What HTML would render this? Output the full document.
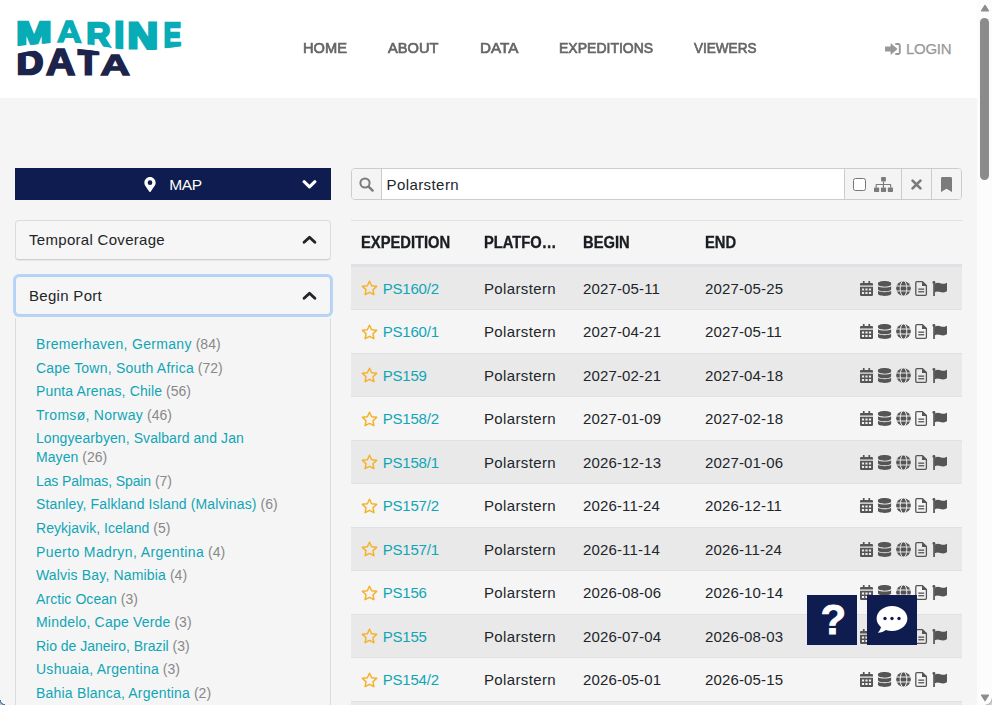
<!DOCTYPE html>
<html lang="en">
<head>
<meta charset="utf-8">
<title>Marine Data - Expeditions</title>
<style>
*{box-sizing:border-box;margin:0;padding:0}
html,body{width:992px;height:705px;overflow:hidden}
body{font-family:"Liberation Sans",sans-serif;font-size:15px;line-height:1.5;color:#212529;background:#f5f5f5;position:relative}
a{color:#10a5b5;text-decoration:none}
svg{display:block}
/* header */
#hdr{position:absolute;left:0;top:0;width:977px;height:98px;background:#fff}
#logo{position:absolute;left:0;top:0;width:200px;height:98px}
.lw{position:absolute;left:0;top:0;width:200px;height:98px;white-space:nowrap;font-kerning:none;font-weight:bold;font-size:40px;line-height:40px;-webkit-text-stroke:3.2px currentColor}
.lw span{display:inline-block;transform-origin:0 0}
#nav a{transform-origin:0 50%;position:absolute;top:37px;height:22px;line-height:22px;font-size:15px;font-weight:normal;-webkit-text-stroke:.7px #666;color:#666;white-space:nowrap}
#login{position:absolute;left:885px;top:38px;height:22px;line-height:22px;color:#999;font-size:15px;white-space:nowrap}
#login svg{position:absolute;left:0;top:5px}
#login span{position:absolute;left:21px;top:0;letter-spacing:-.3px;-webkit-text-stroke:.25px #999}
/* sidebar */
#side{position:absolute;left:15px;top:168px;width:316px}
#mapbar{position:relative;height:32px;background:#0e1c4f;color:#fff;line-height:32px}
#mapbar span{position:absolute;left:154.3px;top:.5px;font-size:15.5px;letter-spacing:-.35px}
#mapbar .mk{position:absolute;left:129px;top:8.5px}
#mapbar .cv{position:absolute;left:287px;top:10.5px}
.pnl{position:absolute;left:0;width:316px;height:39.5px;border:1px solid #dcdcdc;border-bottom-color:#cfcfcf;border-radius:4px;background:#f6f6f6;padding:7.5px 13px;font-size:15px;line-height:22.5px;letter-spacing:.3px}
.pnl svg{position:absolute;right:13px;top:14px}
#p2 svg{top:14.300px}
#p1{top:52px;box-shadow:0 1px 0 rgba(0,0,0,.05)}
#p2{padding-top:8.600px;top:107.700px;border-color:#b3d0f5;box-shadow:0 0 0 2px #b9d4f6}
#plist{position:absolute;left:0;top:149.500px;width:316px;height:400px;border-left:1px solid #dcdcdc;border-right:1px solid #dcdcdc;padding:17.500px 20px 0 20px;font-size:14px;line-height:19.07px;list-style:none;color:#888}
#plist li{margin-bottom:4.5px}
/* main */
#main{position:absolute;left:351px;top:168px;width:611px}
#sbar{position:relative;height:32px;border:1px solid #ccc;border-radius:4px;background:#fff;overflow:hidden}
#sbar .c{position:absolute;top:0;height:30px;background:#f4f4f4;border-left:1px solid #ccc}
#sbar .c svg{position:absolute}
#sbar .q{left:0;width:30px;border-left:0;border-right:1px solid #ccc}
#sbar .txt{position:absolute;left:34.500px;top:.700px;line-height:30px;font-size:15px;color:#212529;letter-spacing:.42px}
#sbar .cb{position:absolute;left:7.700px;top:9px;width:13px;height:13px;border:1px solid #767676;border-radius:2.5px;background:#fff}
#tbl{position:absolute;left:0;top:52px;width:611px;border-collapse:separate;border-spacing:0;font-size:15px}
#tbl th{height:45.5px;padding:0 10px;text-align:left;font-weight:bold;border-top:1px solid #dee2e6;border-bottom:2px solid #dee2e6;white-space:nowrap;vertical-align:middle;color:#1a1d21;font-size:16px;padding-top:1px}
#tbl th span{-webkit-text-stroke:.35px #1a1d21;display:inline-block;transform-origin:0 50%;transform:scaleX(.92)}
#tbl td{height:43.5px;padding:2.4px 10px 0;border-top:1px solid #dee2e6;vertical-align:middle;white-space:nowrap;position:relative}
#tbl tr.o td{background:#e9e9e9}
#tbl td.e a{letter-spacing:-.2px;position:absolute;left:31.700px;top:11.200px;line-height:22.5px}
#tbl td.e svg{position:absolute;left:9.500px;top:13.700px}
#tbl td.p{letter-spacing:.36px}
#tbl td.d{letter-spacing:.14px}
#tbl td.i svg{position:absolute;left:30px;top:14.300px}
/* floating */
.fb{position:absolute;top:595px;width:50px;height:50px;background:#0e1c4f}
.fb svg{position:absolute;left:0;top:0}
.fb b{position:absolute;left:1.300px;top:-.200px;width:50px;text-align:center;color:#fff;font-size:42px;line-height:50px;font-weight:bold;-webkit-text-stroke:.8px #fff}
/* scrollbar */
#sb{position:absolute;left:977px;top:0;width:15px;height:705px;background:#fcfcfc}
#sb i{position:absolute;left:3px;top:18px;width:9px;height:162px;border-radius:4.5px;background:#8b8b8b}
</style>
</head>
<body>

<svg width="0" height="0" style="position:absolute"><defs><mask id="gm" maskUnits="userSpaceOnUse" x="36" y="0" width="15" height="15"><rect x="36" y="0" width="15" height="15" fill="#fff"/><g fill="none" stroke="#000" stroke-width="1"><ellipse cx="43.500" cy="7.500" rx="3.300" ry="7.800"/><path d="M36 5h15M36 10h15"/></g></mask></defs></svg>
<div id="hdr">
<div id="logo" role="img" aria-label="MARINE DATA"><div class="lw" style="color:#07acb6;clip-path:path('M5.00 48.00C5.83 47.88 7.83 47.60 10.00 47.30C12.17 47.00 15.50 46.55 18.00 46.20C20.50 45.85 22.17 45.50 25.00 45.20C27.83 44.90 31.83 44.65 35.00 44.40C38.17 44.15 41.33 43.92 44.00 43.70C46.67 43.48 48.83 43.27 51.00 43.10C53.17 42.93 53.83 42.78 57.00 42.70C60.17 42.62 65.83 42.45 70.00 42.60C74.17 42.75 79.00 43.28 82.00 43.60C85.00 43.92 85.83 44.22 88.00 44.50C90.17 44.78 92.17 44.92 95.00 45.30C97.83 45.68 102.33 46.37 105.00 46.80C107.67 47.23 108.67 47.55 111.00 47.90C113.33 48.25 116.00 48.62 119.00 48.90C122.00 49.18 125.00 49.42 129.00 49.60C133.00 49.78 138.33 49.98 143.00 50.00C147.67 50.02 153.33 49.95 157.00 49.70C160.67 49.45 162.33 48.88 165.00 48.50C167.67 48.12 170.33 47.77 173.00 47.40C175.67 47.03 178.17 46.70 181.00 46.30C183.83 45.90 187.67 45.30 190.00 45.00C192.33 44.70 194.17 44.58 195.00 44.50L195 0L5 0Z')"><span style="-webkit-text-stroke-width:3.2px;transform:matrix(1.0604,0,0,0.8203,16.35,17.51)">M</span><span style="-webkit-text-stroke-width:1.7px;transform:matrix(0.8807,0,0,0.7700,23.45,17.17)">A</span><span style="-webkit-text-stroke-width:2.6px;transform:matrix(0.8417,0,0,0.8964,24.13,16.88)">R</span><span style="-webkit-text-stroke-width:3.2px;transform:matrix(0.8632,0,0,0.9049,23.57,17.11)">I</span><span style="-webkit-text-stroke-width:3.2px;transform:matrix(1.0570,0,0,0.9310,25.45,16.99)">N</span><span style="-webkit-text-stroke-width:3.0px;transform:matrix(0.6496,0,0,0.8879,32.64,17.10)">E</span></div><div class="lw" style="color:#1d244b;clip-path:path('M5.00 56.00C5.83 55.83 7.87 55.42 10.00 55.00C12.13 54.58 14.47 54.12 17.80 53.50C21.13 52.88 26.30 51.93 30.00 51.30C33.70 50.67 36.00 50.25 40.00 49.70C44.00 49.15 49.67 48.27 54.00 48.00C58.33 47.73 62.17 47.97 66.00 48.10C69.83 48.23 73.33 48.47 77.00 48.80C80.67 49.13 84.33 49.63 88.00 50.10C91.67 50.57 94.83 51.03 99.00 51.60C103.17 52.17 108.67 53.05 113.00 53.50C117.33 53.95 121.33 54.08 125.00 54.30C128.67 54.52 132.50 54.68 135.00 54.80C137.50 54.92 139.17 54.97 140.00 55.00L140 98L5 98Z')"><span style="-webkit-text-stroke-width:3.0px;transform:matrix(0.9170,0,0,0.8486,16.72,45.49)">D</span><span style="-webkit-text-stroke-width:1.7px;transform:matrix(1.0281,0,0,0.9446,16.66,42.71)">A</span><span style="-webkit-text-stroke-width:3.2px;transform:matrix(0.8234,0,0,0.8724,20.18,44.56)">T</span><span style="-webkit-text-stroke-width:1.7px;transform:matrix(1.0351,0,0,0.7529,18.14,49.37)">A</span></div></div>
<div id="nav">
  <a style="left:303.3px;transform:scaleX(0.976)">HOME</a>
  <a style="left:388px;transform:scaleX(0.975)">ABOUT</a>
  <a style="left:479.7px;transform:scaleX(1.014)">DATA</a>
  <a style="left:559.2px;transform:scaleX(0.934)">EXPEDITIONS</a>
  <a style="left:694px;transform:scaleX(0.903)">VIEWERS</a>
</div>
<div id="login">
  <svg width="16" height="12" viewBox="0 0 16 12"><path fill="#999" d="M0 3.700Q0 3.400 .4 3.400H5.600V.8Q5.600 0 6.200 .5L12 5.600Q12.400 6 12 6.400L6.200 11.500Q5.600 12 5.600 11.200V8.600H.4Q0 8.600 0 8.300Z"/><path fill="none" stroke="#999" stroke-width="1.900" d="M10.300 1H13.300Q14.800 1 14.800 2.500V9.500Q14.800 11 13.300 11H10.300"/></svg>
  <span>LOGIN</span>
</div>
</div>

<div id="side">
  <div id="mapbar">
    <svg class="mk" width="12" height="15" viewBox="0 0 384 512"><path fill="#fff" d="M172 502C27 291 0 269 0 192C0 86 86 0 192 0s192 86 192 192c0 77-27 99-172 310c-10 14-30 14-40 0zM192 272a80 80 0 1 0 0-160a80 80 0 0 0 0 160z"/></svg>
    <span>MAP</span>
    <svg class="cv" width="15" height="10" viewBox="0 0 15 10"><path fill="none" stroke="#fff" stroke-width="3.100" stroke-linecap="round" stroke-linejoin="round" d="M2.100 2.700L7.500 7.800L12.900 2.700"/></svg>
  </div>
  <div class="pnl" id="p1">Temporal Coverage<svg width="15" height="10" viewBox="0 0 15 10"><path fill="none" stroke="#212529" stroke-width="2.9" stroke-linecap="round" stroke-linejoin="round" d="M2.100 7.300L7.500 2.200L12.900 7.300"/></svg></div>
  <div class="pnl" id="p2">Begin Port<svg width="15" height="10" viewBox="0 0 15 10"><path fill="none" stroke="#212529" stroke-width="2.9" stroke-linecap="round" stroke-linejoin="round" d="M2.100 7.300L7.500 2.200L12.900 7.300"/></svg></div>
  <ul id="plist">
    <li><a style="letter-spacing:0.32px">Bremerhaven, Germany</a> (84)</li>
    <li><a style="letter-spacing:0.21px">Cape Town, South Africa</a> (72)</li>
    <li><a style="letter-spacing:0.13px">Punta Arenas, Chile</a> (56)</li>
    <li><a style="letter-spacing:0.30px">Tromsø, Norway</a> (46)</li>
    <li><a style="letter-spacing:0.08px">Longyearbyen, Svalbard and Jan<br>Mayen</a> (26)</li>
    <li><a style="letter-spacing:-0.10px">Las Palmas, Spain</a> (7)</li>
    <li><a style="letter-spacing:0.13px">Stanley, Falkland Island (Malvinas)</a> (6)</li>
    <li><a style="letter-spacing:0.03px">Reykjavik, Iceland</a> (5)</li>
    <li><a style="letter-spacing:0.39px">Puerto Madryn, Argentina</a> (4)</li>
    <li><a style="letter-spacing:0.17px">Walvis Bay, Namibia</a> (4)</li>
    <li><a style="letter-spacing:0.07px">Arctic Ocean</a> (3)</li>
    <li><a style="letter-spacing:0.20px">Mindelo, Cape Verde</a> (3)</li>
    <li><a style="letter-spacing:-0.02px">Rio de Janeiro, Brazil</a> (3)</li>
    <li><a style="letter-spacing:0.26px">Ushuaia, Argentina</a> (3)</li>
    <li><a style="letter-spacing:0.20px">Bahia Blanca, Argentina</a> (2)</li>
  </ul>
</div>

<div id="main">
  <div id="sbar">
    <div class="c q"><svg style="left:6.500px;top:8px" width="15" height="15" viewBox="0 0 15 15"><circle cx="6" cy="6" r="4.6" fill="none" stroke="#7b7b7b" stroke-width="2"/><path d="M9.6 9.6L13.6 13.6" stroke="#7b7b7b" stroke-width="2.4" stroke-linecap="round"/></svg></div>
    <div class="txt">Polarstern</div>
    <div class="c" style="left:492.300px;width:57px"><div class="cb"></div>
      <svg style="left:28.500px;top:8px" width="19" height="15" viewBox="0 0 19 15"><g fill="#7b7b7b"><rect x="7.100" y="0" width="4.800" height="4.500" rx=".7"/><rect x="0" y="10.400" width="5.200" height="4.600" rx=".7"/><rect x="6.900" y="10.400" width="5.200" height="4.600" rx=".7"/><rect x="13.800" y="10.400" width="5.200" height="4.600" rx=".7"/><path d="M8.900 4.500h1.200v2.400h6.200q.9 0 .9.900v2.600h-1.200v-2.300h-6v2.300h-1.200v-2.300h-6v2.300h-1.200v-2.600q0-.9.900-.9h6.400z"/></g></svg>
    </div>
    <div class="c" style="left:549.200px;width:31px"><svg style="left:9px;top:10px" width="11" height="11" viewBox="0 0 11 11"><path d="M1.600 1.600L9.400 9.400M9.400 1.600L1.600 9.400" stroke="#7b7b7b" stroke-width="2.700" stroke-linecap="round"/></svg></div>
    <div class="c" style="left:579px;width:31px"><svg style="left:9.200px;top:8px" width="11" height="15" viewBox="0 0 11 15"><path fill="#7b7b7b" d="M0 15V1.400Q0 0 1.400 0H9.600Q11 0 11 1.400V15L5.500 11.800Z"/></svg></div>
  </div>
  <table id="tbl">
    <colgroup><col style="width:123px"><col style="width:99px"><col style="width:122px"><col style="width:135px"><col style="width:132px"></colgroup>
    <thead><tr><th><span>EXPEDITION</span></th><th><span>PLATFO…</span></th><th><span>BEGIN</span></th><th><span>END</span></th><th></th></tr></thead>
    <tbody id="tb">
<tr class="o"><td class="e"><svg width="17" height="16" viewBox="0 0 17 16"><path fill="none" stroke="#f5b127" stroke-width="1.500" stroke-linejoin="round" d="M8.5 1.2L10.65 5.7L15.6 6.35L12 9.8L12.9 14.7L8.5 12.3L4.1 14.7L5 9.8L1.4 6.350L6.350 5.700Z"/></svg><a>PS160/2</a></td><td class="p">Polarstern</td><td class="d">2027-05-11</td><td class="d">2027-05-25</td><td class="i"><svg width="88" height="15" viewBox="0 0 88 15"><g fill="#555">
<path fill-rule="evenodd" d="M2.900 0h1.700v1.900h3.800V0h1.700v1.900h1.700q1.200 0 1.200 1.200v1.300H0V3.100q0-1.200 1.200-1.200h1.700zM0 5.700h13v8.100q0 1.200-1.200 1.200H1.200Q0 15 0 13.800zM1.900 7.500h2.200v2.100H1.900zM5.400 7.500h2.200v2.100H5.400zM8.900 7.500h2.200v2.100H8.900zM1.900 11h2.200v2.100H1.900zM5.400 11h2.200v2.100H5.400zM8.900 11h2.200v2.100H8.900z"/>
<path transform="translate(18 0) scale(.0293)" d="M448 73.143v45.714C448 159.143 347.667 192 224 192S0 159.143 0 118.857V73.143C0 32.857 100.333 0 224 0s224 32.857 224 73.143zM448 176v102.857C448 319.143 347.667 352 224 352S0 319.143 0 278.857V176c48.125 33.143 136.208 48.572 224 48.572S399.874 209.143 448 176zm0 160v102.857C448 479.143 347.667 512 224 512S0 479.143 0 438.857V336c48.125 33.143 136.208 48.572 224 48.572S399.874 369.143 448 336z"/>
<circle cx="43.500" cy="7.500" r="7.300" mask="url(#gm)"/>
<path fill="none" stroke="#555" stroke-width="1.300" stroke-linejoin="round" d="M56.800 .650h5.700l3.900 3.900v8.800q0 1-1 1h-8.600q-1 0-1-1v-11.700q0-1 1-1z"/>
<path d="M62 .650v4.400h4.400v-1z"/>
<rect x="58.300" y="7.500" width="5.900" height="1.300"/><rect x="58.300" y="10.100" width="5.900" height="1.300"/>
<path d="M72.400 1.500a1.500 1.500 0 1 1 2.500 1.100V15h-1.700V2.600a1.500 1.500 0 0 1-.8-1.100z"/>
<path d="M74.900 2.500c2-.9 3.600-.9 5.600-.2s3.600.8 6-.4c.3-.1.500 0 .5.400v7.400c0 .4-.2.700-.6.900c-2.300 1.200-4 1.200-6.100.5s-3.500-.7-5.400.2z"/>
</g></svg></td></tr>
<tr><td class="e"><svg width="17" height="16" viewBox="0 0 17 16"><path fill="none" stroke="#f5b127" stroke-width="1.500" stroke-linejoin="round" d="M8.5 1.2L10.65 5.7L15.6 6.35L12 9.8L12.9 14.7L8.5 12.3L4.1 14.7L5 9.8L1.4 6.350L6.350 5.700Z"/></svg><a>PS160/1</a></td><td class="p">Polarstern</td><td class="d">2027-04-21</td><td class="d">2027-05-11</td><td class="i"><svg width="88" height="15" viewBox="0 0 88 15"><g fill="#555">
<path fill-rule="evenodd" d="M2.900 0h1.700v1.900h3.800V0h1.700v1.900h1.700q1.200 0 1.200 1.200v1.300H0V3.100q0-1.200 1.200-1.200h1.700zM0 5.700h13v8.100q0 1.200-1.200 1.200H1.200Q0 15 0 13.800zM1.900 7.500h2.200v2.100H1.900zM5.400 7.500h2.200v2.100H5.400zM8.900 7.500h2.200v2.100H8.900zM1.900 11h2.200v2.100H1.900zM5.400 11h2.200v2.100H5.400zM8.900 11h2.200v2.100H8.900z"/>
<path transform="translate(18 0) scale(.0293)" d="M448 73.143v45.714C448 159.143 347.667 192 224 192S0 159.143 0 118.857V73.143C0 32.857 100.333 0 224 0s224 32.857 224 73.143zM448 176v102.857C448 319.143 347.667 352 224 352S0 319.143 0 278.857V176c48.125 33.143 136.208 48.572 224 48.572S399.874 209.143 448 176zm0 160v102.857C448 479.143 347.667 512 224 512S0 479.143 0 438.857V336c48.125 33.143 136.208 48.572 224 48.572S399.874 369.143 448 336z"/>
<circle cx="43.500" cy="7.500" r="7.300" mask="url(#gm)"/>
<path fill="none" stroke="#555" stroke-width="1.300" stroke-linejoin="round" d="M56.800 .650h5.700l3.900 3.900v8.800q0 1-1 1h-8.600q-1 0-1-1v-11.700q0-1 1-1z"/>
<path d="M62 .650v4.400h4.400v-1z"/>
<rect x="58.300" y="7.500" width="5.900" height="1.300"/><rect x="58.300" y="10.100" width="5.900" height="1.300"/>
<path d="M72.400 1.500a1.500 1.500 0 1 1 2.500 1.100V15h-1.700V2.600a1.500 1.500 0 0 1-.8-1.100z"/>
<path d="M74.900 2.500c2-.9 3.600-.9 5.600-.2s3.600.8 6-.4c.3-.1.500 0 .5.400v7.400c0 .4-.2.700-.6.900c-2.300 1.200-4 1.200-6.100.5s-3.500-.7-5.400.2z"/>
</g></svg></td></tr>
<tr class="o"><td class="e"><svg width="17" height="16" viewBox="0 0 17 16"><path fill="none" stroke="#f5b127" stroke-width="1.500" stroke-linejoin="round" d="M8.5 1.2L10.65 5.7L15.6 6.35L12 9.8L12.9 14.7L8.5 12.3L4.1 14.7L5 9.8L1.4 6.350L6.350 5.700Z"/></svg><a>PS159</a></td><td class="p">Polarstern</td><td class="d">2027-02-21</td><td class="d">2027-04-18</td><td class="i"><svg width="88" height="15" viewBox="0 0 88 15"><g fill="#555">
<path fill-rule="evenodd" d="M2.900 0h1.700v1.900h3.800V0h1.700v1.900h1.700q1.200 0 1.200 1.200v1.300H0V3.100q0-1.200 1.200-1.200h1.700zM0 5.700h13v8.100q0 1.200-1.200 1.200H1.200Q0 15 0 13.800zM1.900 7.500h2.200v2.100H1.900zM5.400 7.500h2.200v2.100H5.400zM8.900 7.500h2.200v2.100H8.900zM1.900 11h2.200v2.100H1.900zM5.400 11h2.200v2.100H5.400zM8.900 11h2.200v2.100H8.900z"/>
<path transform="translate(18 0) scale(.0293)" d="M448 73.143v45.714C448 159.143 347.667 192 224 192S0 159.143 0 118.857V73.143C0 32.857 100.333 0 224 0s224 32.857 224 73.143zM448 176v102.857C448 319.143 347.667 352 224 352S0 319.143 0 278.857V176c48.125 33.143 136.208 48.572 224 48.572S399.874 209.143 448 176zm0 160v102.857C448 479.143 347.667 512 224 512S0 479.143 0 438.857V336c48.125 33.143 136.208 48.572 224 48.572S399.874 369.143 448 336z"/>
<circle cx="43.500" cy="7.500" r="7.300" mask="url(#gm)"/>
<path fill="none" stroke="#555" stroke-width="1.300" stroke-linejoin="round" d="M56.800 .650h5.700l3.900 3.900v8.800q0 1-1 1h-8.600q-1 0-1-1v-11.700q0-1 1-1z"/>
<path d="M62 .650v4.400h4.400v-1z"/>
<rect x="58.300" y="7.500" width="5.900" height="1.300"/><rect x="58.300" y="10.100" width="5.900" height="1.300"/>
<path d="M72.400 1.500a1.500 1.500 0 1 1 2.500 1.100V15h-1.700V2.600a1.500 1.500 0 0 1-.8-1.100z"/>
<path d="M74.900 2.500c2-.9 3.600-.9 5.600-.2s3.600.8 6-.4c.3-.1.500 0 .5.400v7.400c0 .4-.2.700-.6.900c-2.300 1.200-4 1.200-6.100.5s-3.500-.7-5.400.2z"/>
</g></svg></td></tr>
<tr><td class="e"><svg width="17" height="16" viewBox="0 0 17 16"><path fill="none" stroke="#f5b127" stroke-width="1.500" stroke-linejoin="round" d="M8.5 1.2L10.65 5.7L15.6 6.35L12 9.8L12.9 14.7L8.5 12.3L4.1 14.7L5 9.8L1.4 6.350L6.350 5.700Z"/></svg><a>PS158/2</a></td><td class="p">Polarstern</td><td class="d">2027-01-09</td><td class="d">2027-02-18</td><td class="i"><svg width="88" height="15" viewBox="0 0 88 15"><g fill="#555">
<path fill-rule="evenodd" d="M2.900 0h1.700v1.900h3.800V0h1.700v1.900h1.700q1.200 0 1.200 1.200v1.300H0V3.100q0-1.200 1.200-1.200h1.700zM0 5.700h13v8.100q0 1.200-1.200 1.200H1.200Q0 15 0 13.800zM1.900 7.500h2.200v2.100H1.900zM5.400 7.500h2.200v2.100H5.400zM8.900 7.500h2.200v2.100H8.900zM1.900 11h2.200v2.100H1.900zM5.400 11h2.200v2.100H5.400zM8.900 11h2.200v2.100H8.900z"/>
<path transform="translate(18 0) scale(.0293)" d="M448 73.143v45.714C448 159.143 347.667 192 224 192S0 159.143 0 118.857V73.143C0 32.857 100.333 0 224 0s224 32.857 224 73.143zM448 176v102.857C448 319.143 347.667 352 224 352S0 319.143 0 278.857V176c48.125 33.143 136.208 48.572 224 48.572S399.874 209.143 448 176zm0 160v102.857C448 479.143 347.667 512 224 512S0 479.143 0 438.857V336c48.125 33.143 136.208 48.572 224 48.572S399.874 369.143 448 336z"/>
<circle cx="43.500" cy="7.500" r="7.300" mask="url(#gm)"/>
<path fill="none" stroke="#555" stroke-width="1.300" stroke-linejoin="round" d="M56.800 .650h5.700l3.900 3.900v8.800q0 1-1 1h-8.600q-1 0-1-1v-11.700q0-1 1-1z"/>
<path d="M62 .650v4.400h4.400v-1z"/>
<rect x="58.300" y="7.500" width="5.900" height="1.300"/><rect x="58.300" y="10.100" width="5.900" height="1.300"/>
<path d="M72.400 1.500a1.500 1.500 0 1 1 2.500 1.100V15h-1.700V2.600a1.500 1.500 0 0 1-.8-1.100z"/>
<path d="M74.900 2.500c2-.9 3.600-.9 5.600-.2s3.600.8 6-.4c.3-.1.500 0 .5.400v7.400c0 .4-.2.700-.6.900c-2.300 1.200-4 1.200-6.100.5s-3.500-.7-5.400.2z"/>
</g></svg></td></tr>
<tr class="o"><td class="e"><svg width="17" height="16" viewBox="0 0 17 16"><path fill="none" stroke="#f5b127" stroke-width="1.500" stroke-linejoin="round" d="M8.5 1.2L10.65 5.7L15.6 6.35L12 9.8L12.9 14.7L8.5 12.3L4.1 14.7L5 9.8L1.4 6.350L6.350 5.700Z"/></svg><a>PS158/1</a></td><td class="p">Polarstern</td><td class="d">2026-12-13</td><td class="d">2027-01-06</td><td class="i"><svg width="88" height="15" viewBox="0 0 88 15"><g fill="#555">
<path fill-rule="evenodd" d="M2.900 0h1.700v1.900h3.800V0h1.700v1.900h1.700q1.200 0 1.200 1.200v1.300H0V3.100q0-1.200 1.200-1.200h1.700zM0 5.700h13v8.100q0 1.200-1.200 1.200H1.200Q0 15 0 13.800zM1.900 7.500h2.200v2.100H1.900zM5.400 7.500h2.200v2.100H5.400zM8.900 7.500h2.200v2.100H8.900zM1.900 11h2.200v2.100H1.900zM5.400 11h2.200v2.100H5.400zM8.900 11h2.200v2.100H8.900z"/>
<path transform="translate(18 0) scale(.0293)" d="M448 73.143v45.714C448 159.143 347.667 192 224 192S0 159.143 0 118.857V73.143C0 32.857 100.333 0 224 0s224 32.857 224 73.143zM448 176v102.857C448 319.143 347.667 352 224 352S0 319.143 0 278.857V176c48.125 33.143 136.208 48.572 224 48.572S399.874 209.143 448 176zm0 160v102.857C448 479.143 347.667 512 224 512S0 479.143 0 438.857V336c48.125 33.143 136.208 48.572 224 48.572S399.874 369.143 448 336z"/>
<circle cx="43.500" cy="7.500" r="7.300" mask="url(#gm)"/>
<path fill="none" stroke="#555" stroke-width="1.300" stroke-linejoin="round" d="M56.800 .650h5.700l3.900 3.900v8.800q0 1-1 1h-8.600q-1 0-1-1v-11.700q0-1 1-1z"/>
<path d="M62 .650v4.400h4.400v-1z"/>
<rect x="58.300" y="7.500" width="5.900" height="1.300"/><rect x="58.300" y="10.100" width="5.900" height="1.300"/>
<path d="M72.400 1.500a1.500 1.500 0 1 1 2.500 1.100V15h-1.700V2.600a1.500 1.500 0 0 1-.8-1.100z"/>
<path d="M74.900 2.500c2-.9 3.600-.9 5.600-.2s3.600.8 6-.4c.3-.1.500 0 .5.400v7.400c0 .4-.2.700-.6.900c-2.300 1.200-4 1.200-6.100.5s-3.500-.7-5.400.2z"/>
</g></svg></td></tr>
<tr><td class="e"><svg width="17" height="16" viewBox="0 0 17 16"><path fill="none" stroke="#f5b127" stroke-width="1.500" stroke-linejoin="round" d="M8.5 1.2L10.65 5.7L15.6 6.35L12 9.8L12.9 14.7L8.5 12.3L4.1 14.7L5 9.8L1.4 6.350L6.350 5.700Z"/></svg><a>PS157/2</a></td><td class="p">Polarstern</td><td class="d">2026-11-24</td><td class="d">2026-12-11</td><td class="i"><svg width="88" height="15" viewBox="0 0 88 15"><g fill="#555">
<path fill-rule="evenodd" d="M2.900 0h1.700v1.900h3.800V0h1.700v1.900h1.700q1.200 0 1.200 1.200v1.300H0V3.100q0-1.200 1.200-1.200h1.700zM0 5.700h13v8.100q0 1.200-1.200 1.200H1.200Q0 15 0 13.800zM1.900 7.500h2.200v2.100H1.900zM5.400 7.500h2.200v2.100H5.400zM8.900 7.500h2.200v2.100H8.900zM1.900 11h2.200v2.100H1.900zM5.400 11h2.200v2.100H5.400zM8.900 11h2.200v2.100H8.900z"/>
<path transform="translate(18 0) scale(.0293)" d="M448 73.143v45.714C448 159.143 347.667 192 224 192S0 159.143 0 118.857V73.143C0 32.857 100.333 0 224 0s224 32.857 224 73.143zM448 176v102.857C448 319.143 347.667 352 224 352S0 319.143 0 278.857V176c48.125 33.143 136.208 48.572 224 48.572S399.874 209.143 448 176zm0 160v102.857C448 479.143 347.667 512 224 512S0 479.143 0 438.857V336c48.125 33.143 136.208 48.572 224 48.572S399.874 369.143 448 336z"/>
<circle cx="43.500" cy="7.500" r="7.300" mask="url(#gm)"/>
<path fill="none" stroke="#555" stroke-width="1.300" stroke-linejoin="round" d="M56.800 .650h5.700l3.900 3.900v8.800q0 1-1 1h-8.600q-1 0-1-1v-11.700q0-1 1-1z"/>
<path d="M62 .650v4.400h4.400v-1z"/>
<rect x="58.300" y="7.500" width="5.900" height="1.300"/><rect x="58.300" y="10.100" width="5.900" height="1.300"/>
<path d="M72.400 1.500a1.500 1.500 0 1 1 2.500 1.100V15h-1.700V2.600a1.500 1.500 0 0 1-.8-1.100z"/>
<path d="M74.900 2.500c2-.9 3.600-.9 5.600-.2s3.600.8 6-.4c.3-.1.500 0 .5.400v7.400c0 .4-.2.700-.6.900c-2.300 1.200-4 1.200-6.100.5s-3.500-.7-5.400.2z"/>
</g></svg></td></tr>
<tr class="o"><td class="e"><svg width="17" height="16" viewBox="0 0 17 16"><path fill="none" stroke="#f5b127" stroke-width="1.500" stroke-linejoin="round" d="M8.5 1.2L10.65 5.7L15.6 6.35L12 9.8L12.9 14.7L8.5 12.3L4.1 14.7L5 9.8L1.4 6.350L6.350 5.700Z"/></svg><a>PS157/1</a></td><td class="p">Polarstern</td><td class="d">2026-11-14</td><td class="d">2026-11-24</td><td class="i"><svg width="88" height="15" viewBox="0 0 88 15"><g fill="#555">
<path fill-rule="evenodd" d="M2.900 0h1.700v1.900h3.800V0h1.700v1.900h1.700q1.200 0 1.200 1.200v1.300H0V3.100q0-1.200 1.200-1.200h1.700zM0 5.700h13v8.100q0 1.200-1.200 1.200H1.200Q0 15 0 13.800zM1.900 7.500h2.200v2.100H1.900zM5.400 7.500h2.200v2.100H5.400zM8.900 7.500h2.200v2.100H8.900zM1.900 11h2.200v2.100H1.900zM5.400 11h2.200v2.100H5.400zM8.900 11h2.200v2.100H8.900z"/>
<path transform="translate(18 0) scale(.0293)" d="M448 73.143v45.714C448 159.143 347.667 192 224 192S0 159.143 0 118.857V73.143C0 32.857 100.333 0 224 0s224 32.857 224 73.143zM448 176v102.857C448 319.143 347.667 352 224 352S0 319.143 0 278.857V176c48.125 33.143 136.208 48.572 224 48.572S399.874 209.143 448 176zm0 160v102.857C448 479.143 347.667 512 224 512S0 479.143 0 438.857V336c48.125 33.143 136.208 48.572 224 48.572S399.874 369.143 448 336z"/>
<circle cx="43.500" cy="7.500" r="7.300" mask="url(#gm)"/>
<path fill="none" stroke="#555" stroke-width="1.300" stroke-linejoin="round" d="M56.800 .650h5.700l3.900 3.900v8.800q0 1-1 1h-8.600q-1 0-1-1v-11.700q0-1 1-1z"/>
<path d="M62 .650v4.400h4.400v-1z"/>
<rect x="58.300" y="7.500" width="5.900" height="1.300"/><rect x="58.300" y="10.100" width="5.900" height="1.300"/>
<path d="M72.400 1.500a1.500 1.500 0 1 1 2.500 1.100V15h-1.700V2.600a1.500 1.500 0 0 1-.8-1.100z"/>
<path d="M74.900 2.500c2-.9 3.600-.9 5.600-.2s3.600.8 6-.4c.3-.1.500 0 .5.400v7.400c0 .4-.2.700-.6.900c-2.300 1.200-4 1.200-6.100.5s-3.500-.7-5.400.2z"/>
</g></svg></td></tr>
<tr><td class="e"><svg width="17" height="16" viewBox="0 0 17 16"><path fill="none" stroke="#f5b127" stroke-width="1.500" stroke-linejoin="round" d="M8.5 1.2L10.65 5.7L15.6 6.35L12 9.8L12.9 14.7L8.5 12.3L4.1 14.7L5 9.8L1.4 6.350L6.350 5.700Z"/></svg><a>PS156</a></td><td class="p">Polarstern</td><td class="d">2026-08-06</td><td class="d">2026-10-14</td><td class="i"><svg width="88" height="15" viewBox="0 0 88 15"><g fill="#555">
<path fill-rule="evenodd" d="M2.900 0h1.700v1.900h3.800V0h1.700v1.900h1.700q1.200 0 1.200 1.200v1.300H0V3.100q0-1.200 1.200-1.200h1.700zM0 5.700h13v8.100q0 1.200-1.200 1.200H1.200Q0 15 0 13.800zM1.900 7.500h2.200v2.100H1.900zM5.400 7.500h2.200v2.100H5.400zM8.900 7.500h2.200v2.100H8.900zM1.900 11h2.200v2.100H1.900zM5.400 11h2.200v2.100H5.400zM8.900 11h2.200v2.100H8.900z"/>
<path transform="translate(18 0) scale(.0293)" d="M448 73.143v45.714C448 159.143 347.667 192 224 192S0 159.143 0 118.857V73.143C0 32.857 100.333 0 224 0s224 32.857 224 73.143zM448 176v102.857C448 319.143 347.667 352 224 352S0 319.143 0 278.857V176c48.125 33.143 136.208 48.572 224 48.572S399.874 209.143 448 176zm0 160v102.857C448 479.143 347.667 512 224 512S0 479.143 0 438.857V336c48.125 33.143 136.208 48.572 224 48.572S399.874 369.143 448 336z"/>
<circle cx="43.500" cy="7.500" r="7.300" mask="url(#gm)"/>
<path fill="none" stroke="#555" stroke-width="1.300" stroke-linejoin="round" d="M56.800 .650h5.700l3.900 3.900v8.800q0 1-1 1h-8.600q-1 0-1-1v-11.700q0-1 1-1z"/>
<path d="M62 .650v4.400h4.400v-1z"/>
<rect x="58.300" y="7.500" width="5.900" height="1.300"/><rect x="58.300" y="10.100" width="5.900" height="1.300"/>
<path d="M72.400 1.500a1.500 1.500 0 1 1 2.500 1.100V15h-1.700V2.600a1.500 1.500 0 0 1-.8-1.100z"/>
<path d="M74.900 2.500c2-.9 3.600-.9 5.600-.2s3.600.8 6-.4c.3-.1.500 0 .5.400v7.400c0 .4-.2.700-.6.900c-2.300 1.200-4 1.200-6.100.5s-3.500-.7-5.400.2z"/>
</g></svg></td></tr>
<tr class="o"><td class="e"><svg width="17" height="16" viewBox="0 0 17 16"><path fill="none" stroke="#f5b127" stroke-width="1.500" stroke-linejoin="round" d="M8.5 1.2L10.65 5.7L15.6 6.35L12 9.8L12.9 14.7L8.5 12.3L4.1 14.7L5 9.8L1.4 6.350L6.350 5.700Z"/></svg><a>PS155</a></td><td class="p">Polarstern</td><td class="d">2026-07-04</td><td class="d">2026-08-03</td><td class="i"><svg width="88" height="15" viewBox="0 0 88 15"><g fill="#555">
<path fill-rule="evenodd" d="M2.900 0h1.700v1.900h3.800V0h1.700v1.900h1.700q1.200 0 1.200 1.200v1.300H0V3.100q0-1.200 1.200-1.200h1.700zM0 5.700h13v8.100q0 1.200-1.200 1.200H1.200Q0 15 0 13.800zM1.900 7.500h2.200v2.100H1.900zM5.400 7.500h2.200v2.100H5.400zM8.900 7.500h2.200v2.100H8.900zM1.900 11h2.200v2.100H1.900zM5.400 11h2.200v2.100H5.400zM8.900 11h2.200v2.100H8.900z"/>
<path transform="translate(18 0) scale(.0293)" d="M448 73.143v45.714C448 159.143 347.667 192 224 192S0 159.143 0 118.857V73.143C0 32.857 100.333 0 224 0s224 32.857 224 73.143zM448 176v102.857C448 319.143 347.667 352 224 352S0 319.143 0 278.857V176c48.125 33.143 136.208 48.572 224 48.572S399.874 209.143 448 176zm0 160v102.857C448 479.143 347.667 512 224 512S0 479.143 0 438.857V336c48.125 33.143 136.208 48.572 224 48.572S399.874 369.143 448 336z"/>
<circle cx="43.500" cy="7.500" r="7.300" mask="url(#gm)"/>
<path fill="none" stroke="#555" stroke-width="1.300" stroke-linejoin="round" d="M56.800 .650h5.700l3.900 3.900v8.800q0 1-1 1h-8.600q-1 0-1-1v-11.700q0-1 1-1z"/>
<path d="M62 .650v4.400h4.400v-1z"/>
<rect x="58.300" y="7.500" width="5.900" height="1.300"/><rect x="58.300" y="10.100" width="5.900" height="1.300"/>
<path d="M72.400 1.500a1.500 1.500 0 1 1 2.500 1.100V15h-1.700V2.600a1.500 1.500 0 0 1-.8-1.100z"/>
<path d="M74.900 2.500c2-.9 3.600-.9 5.600-.2s3.600.8 6-.4c.3-.1.500 0 .5.400v7.400c0 .4-.2.700-.6.900c-2.300 1.200-4 1.200-6.100.5s-3.500-.7-5.400.2z"/>
</g></svg></td></tr>
<tr><td class="e"><svg width="17" height="16" viewBox="0 0 17 16"><path fill="none" stroke="#f5b127" stroke-width="1.500" stroke-linejoin="round" d="M8.5 1.2L10.65 5.7L15.6 6.35L12 9.8L12.9 14.7L8.5 12.3L4.1 14.7L5 9.8L1.4 6.350L6.350 5.700Z"/></svg><a>PS154/2</a></td><td class="p">Polarstern</td><td class="d">2026-05-01</td><td class="d">2026-05-15</td><td class="i"><svg width="88" height="15" viewBox="0 0 88 15"><g fill="#555">
<path fill-rule="evenodd" d="M2.900 0h1.700v1.900h3.800V0h1.700v1.900h1.700q1.200 0 1.200 1.200v1.300H0V3.100q0-1.200 1.200-1.200h1.700zM0 5.700h13v8.100q0 1.200-1.200 1.200H1.200Q0 15 0 13.800zM1.900 7.500h2.200v2.100H1.900zM5.400 7.500h2.200v2.100H5.400zM8.900 7.500h2.200v2.100H8.900zM1.900 11h2.200v2.100H1.900zM5.400 11h2.200v2.100H5.400zM8.900 11h2.200v2.100H8.900z"/>
<path transform="translate(18 0) scale(.0293)" d="M448 73.143v45.714C448 159.143 347.667 192 224 192S0 159.143 0 118.857V73.143C0 32.857 100.333 0 224 0s224 32.857 224 73.143zM448 176v102.857C448 319.143 347.667 352 224 352S0 319.143 0 278.857V176c48.125 33.143 136.208 48.572 224 48.572S399.874 209.143 448 176zm0 160v102.857C448 479.143 347.667 512 224 512S0 479.143 0 438.857V336c48.125 33.143 136.208 48.572 224 48.572S399.874 369.143 448 336z"/>
<circle cx="43.500" cy="7.500" r="7.300" mask="url(#gm)"/>
<path fill="none" stroke="#555" stroke-width="1.300" stroke-linejoin="round" d="M56.800 .650h5.700l3.900 3.900v8.800q0 1-1 1h-8.600q-1 0-1-1v-11.700q0-1 1-1z"/>
<path d="M62 .650v4.400h4.400v-1z"/>
<rect x="58.300" y="7.500" width="5.900" height="1.300"/><rect x="58.300" y="10.100" width="5.900" height="1.300"/>
<path d="M72.400 1.500a1.500 1.500 0 1 1 2.500 1.100V15h-1.700V2.600a1.500 1.500 0 0 1-.8-1.100z"/>
<path d="M74.900 2.500c2-.9 3.600-.9 5.600-.2s3.600.8 6-.4c.3-.1.500 0 .5.400v7.400c0 .4-.2.700-.6.900c-2.300 1.200-4 1.200-6.100.5s-3.500-.7-5.400.2z"/>
</g></svg></td></tr>
<tr class="o"><td class="e"><svg width="17" height="16" viewBox="0 0 17 16"><path fill="none" stroke="#f5b127" stroke-width="1.500" stroke-linejoin="round" d="M8.5 1.2L10.65 5.7L15.6 6.35L12 9.8L12.9 14.7L8.5 12.3L4.1 14.7L5 9.8L1.4 6.350L6.350 5.700Z"/></svg><a>PS154/1</a></td><td class="p">Polarstern</td><td class="d">2026-03-20</td><td class="d">2026-05-01</td><td class="i"><svg width="88" height="15" viewBox="0 0 88 15"><g fill="#555">
<path fill-rule="evenodd" d="M2.900 0h1.700v1.900h3.800V0h1.700v1.900h1.700q1.200 0 1.200 1.200v1.300H0V3.100q0-1.200 1.200-1.200h1.700zM0 5.700h13v8.100q0 1.200-1.200 1.200H1.200Q0 15 0 13.800zM1.900 7.500h2.200v2.100H1.900zM5.400 7.500h2.200v2.100H5.400zM8.900 7.500h2.200v2.100H8.900zM1.900 11h2.200v2.100H1.900zM5.400 11h2.200v2.100H5.400zM8.900 11h2.200v2.100H8.900z"/>
<path transform="translate(18 0) scale(.0293)" d="M448 73.143v45.714C448 159.143 347.667 192 224 192S0 159.143 0 118.857V73.143C0 32.857 100.333 0 224 0s224 32.857 224 73.143zM448 176v102.857C448 319.143 347.667 352 224 352S0 319.143 0 278.857V176c48.125 33.143 136.208 48.572 224 48.572S399.874 209.143 448 176zm0 160v102.857C448 479.143 347.667 512 224 512S0 479.143 0 438.857V336c48.125 33.143 136.208 48.572 224 48.572S399.874 369.143 448 336z"/>
<circle cx="43.500" cy="7.500" r="7.300" mask="url(#gm)"/>
<path fill="none" stroke="#555" stroke-width="1.300" stroke-linejoin="round" d="M56.800 .650h5.700l3.900 3.900v8.800q0 1-1 1h-8.600q-1 0-1-1v-11.700q0-1 1-1z"/>
<path d="M62 .650v4.400h4.400v-1z"/>
<rect x="58.300" y="7.500" width="5.900" height="1.300"/><rect x="58.300" y="10.100" width="5.900" height="1.300"/>
<path d="M72.400 1.500a1.500 1.500 0 1 1 2.500 1.100V15h-1.700V2.600a1.500 1.500 0 0 1-.8-1.100z"/>
<path d="M74.900 2.500c2-.9 3.600-.9 5.600-.2s3.600.8 6-.4c.3-.1.500 0 .5.400v7.400c0 .4-.2.700-.6.900c-2.300 1.200-4 1.200-6.100.5s-3.500-.7-5.400.2z"/>
</g></svg></td></tr>
    </tbody>
  </table>
</div>

<div class="fb" style="left:807px"><b>?</b></div>
<div class="fb" style="left:867px"><svg width="50" height="50" viewBox="0 0 50 50"><path fill="#fff" d="M25 11c8.600 0 15.400 5.600 15.400 12.500S33.600 36 25 36c-2.200 0-4.300-.4-6.200-1c-1.900 1.500-4.700 2.800-8 2.800c1.600-1.600 2.800-3.700 3.200-5.800c-2.700-2.200-4.400-5.200-4.400-8.500C9.600 16.600 16.400 11 25 11z"/><g fill="#0e1c4f"><circle cx="18" cy="23.500" r="1.700"/><circle cx="25" cy="23.500" r="1.700"/><circle cx="32" cy="23.500" r="1.700"/></g></svg></div>

<div id="sb"><svg style="position:absolute;left:2.600px;top:4px" width="10" height="8" viewBox="0 0 10 8"><path fill="#8b8b8b" stroke="#8b8b8b" stroke-width="1.200" stroke-linejoin="round" d="M5 1.400L8.500 6.800H1.500Z"/></svg><i></i><svg style="position:absolute;left:2.600px;top:693.500px" width="10" height="8" viewBox="0 0 10 8"><path fill="#8b8b8b" stroke="#8b8b8b" stroke-width="1.200" stroke-linejoin="round" d="M5 6.600L8.500 1.200H1.500Z"/></svg></div>

<div style="position:absolute;left:985px;top:698px;width:7px;height:7px;background:radial-gradient(circle at 0 0,rgba(0,0,0,0) 6.300px,#b4b4b4 7px,#d2d2d2 8.500px)"></div>
<div style="position:absolute;left:0;top:700px;width:5px;height:5px;background:radial-gradient(circle at 100% 0,rgba(0,0,0,0) 3.800px,#3a6ea5 4.500px,#c5cbcc 6px)"></div>
</body>
</html>
